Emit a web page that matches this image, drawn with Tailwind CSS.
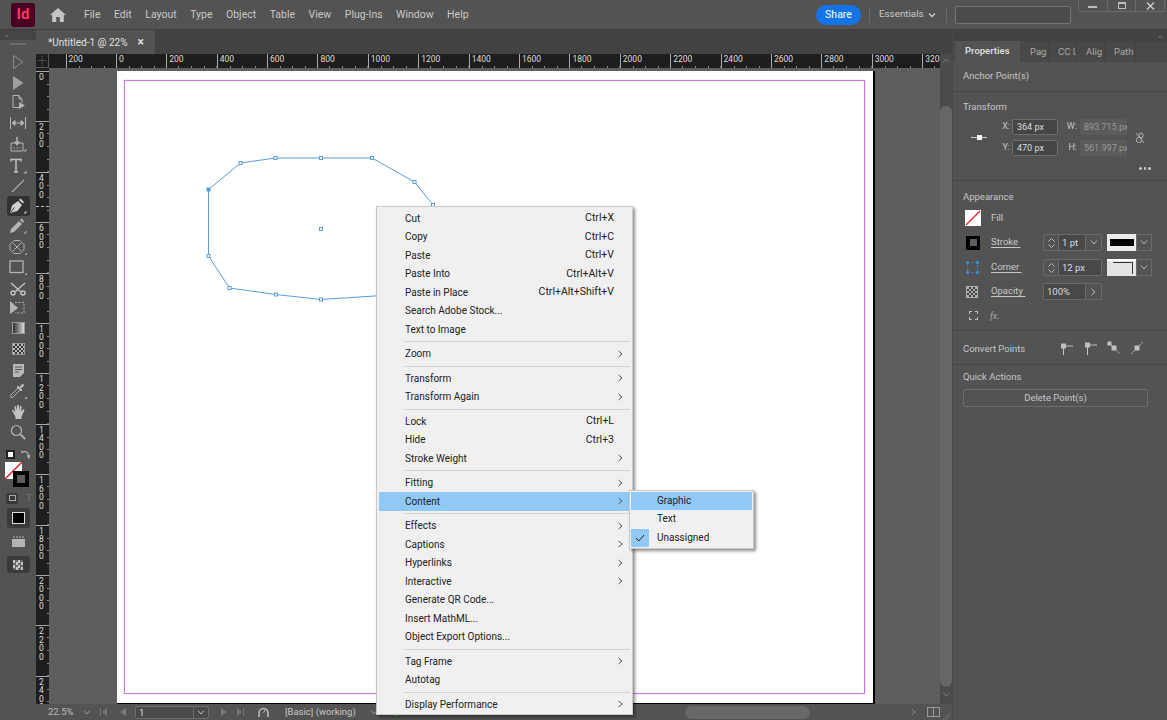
<!DOCTYPE html>
<html lang="en">
<head>
  <meta charset="UTF-8">
  <title>InDesign</title>
  <script src="https://cdn.jsdelivr.net/npm/@tailwindcss/browser@4"></script>
</head>
<body class="w-[1167px] h-[720px] overflow-hidden bg-[#535353] font-['Roboto',sans-serif] text-[10.5px] text-[#c8c8c8]">
<div class="relative flex flex-col w-[1167px] h-[720px]">

  <!-- app bar -->
  <div class="flex items-center h-[29px] shrink-0 bg-[#535353]">
    <div class="ml-[11px] w-[24px] h-[24px] rounded-[3px] bg-[#49021f] text-[#ff3366] text-[15px] font-bold flex items-center justify-center">Id</div>
    <svg class="ml-[15px] w-[16px] h-[14px]" viewBox="0 0 16 14" fill="#c4c4c4"><path d="M8 0 L0 7 L2.2 7 L2.2 14 L6.2 14 L6.2 9 L9.8 9 L9.8 14 L13.8 14 L13.8 7 L16 7Z"/></svg>
    <div class="ml-[18px] flex gap-[13.5px]">
      <span>File</span><span>Edit</span><span>Layout</span><span>Type</span><span>Object</span><span>Table</span><span>View</span><span>Plug-Ins</span><span>Window</span><span>Help</span>
    </div>
    <div class="ml-auto w-[45px] h-[20px] rounded-full bg-[#1473e6] text-white flex items-center justify-center">Share</div>
    <div class="ml-[8px] w-px h-[16px] bg-[#6a6a6a]"></div>
    <span class="ml-[9px] w-[42px] whitespace-nowrap text-[9.8px]">Essentials</span>
    <svg class="ml-[7px] w-[8px] h-[6px]" viewBox="0 0 8 6" fill="none" stroke="#c8c8c8" stroke-width="1.4"><path d="M1 1.5 L4 4.5 L7 1.5"/></svg>
    <div class="ml-[10px] w-px h-[16px] bg-[#6a6a6a]"></div>
    <div class="ml-[8px] w-[116px] h-[18px] rounded-[2px] border border-[#757575] bg-[#4b4b4b]"></div>
    <div class="ml-[7px] mr-[2px] self-start w-[87px] h-[12px] flex border border-t-0 border-[#6a6a6a] rounded-b-[2px]">
      <div class="flex-1 flex items-center justify-center border-r border-[#6a6a6a]"><div class="w-[9px] h-[2px] mt-[3px] bg-[#bbb]"></div></div>
      <div class="flex-1 flex items-center justify-center border-r border-[#6a6a6a]"><div class="w-[8px] h-[7px] border border-t-2 border-[#bbb]"></div></div>
      <div class="flex-1 flex items-center justify-center">
        <svg class="w-[9px] h-[8px]" viewBox="0 0 9 8" stroke="#ccc" stroke-width="1.4"><path d="M1 0.5 L8 7.5 M8 0.5 L1 7.5"/></svg>
      </div>
    </div>
  </div>

  <div class="flex flex-1 min-h-0 border-t border-[#3f3f3f]">

    <!-- tools -->
    <div class="w-[36px] shrink-0 flex flex-col items-center bg-[#535353]">
      <div class="w-full h-[10px] bg-[#444] flex items-center pl-[5px] text-[6px] leading-none text-[#aaa]">››</div>
      <div class="mt-[3px] mb-[7px] w-[16px] h-[2px] border-y border-[#6c6c6c]"></div>

      <div class="flex flex-col items-center w-full" id="tools">
        <div class="h-[20.4px] flex items-center"><svg class="w-[16px] h-[16px]" viewBox="0 0 16 16" fill="none" stroke="#8b8b8b"><path d="M3.5 1.5 L13 8 L3.5 14.5Z"/></svg></div>
        <div class="h-[20.4px] flex items-center"><svg class="w-[16px] h-[16px]" viewBox="0 0 16 16" fill="#a0a0a0"><path d="M3 1 L13.5 8 L3 15Z"/></svg></div>
        <div class="h-[19.4px] flex items-center"><svg class="w-[16px] h-[16px]" viewBox="0 0 16 16" fill="none" stroke="#b4b4b4"><path d="M3 1.5 H9 L12 5 V9 M3 1.5 V13.5 H9 M9 1.5 V5 H12"/><path d="M9 8 L15 11.5 L9 15Z" fill="#b4b4b4" stroke="none"/></svg></div>
        <div class="h-[21.4px] flex items-center"><svg class="w-[18px] h-[16px]" viewBox="0 0 18 16" fill="none" stroke="#b4b4b4"><path d="M1.5 2 V14 M16.5 2 V14 M3 8 H15"/><path d="M3 8 L6 5.5 V10.5Z M15 8 L12 5.5 V10.5Z" fill="#b4b4b4"/></svg></div>
        <div class="h-[21.4px] flex items-center"><svg class="w-[18px] h-[17px]" viewBox="0 0 18 17" fill="none" stroke="#b4b4b4"><path d="M2 7 V15 H14 V7 H10 M6 7 H2"/><path d="M8 1 V8 M5.5 5.5 L8 8.5 L10.5 5.5" stroke-width="1.6"/><path d="M4.5 12 H11.5" stroke-dasharray="1.5 1.5"/><path d="M15 15 H17 V13" stroke-width="1"/></svg></div>
        <div class="h-[21.4px] flex items-center"><svg class="w-[18px] h-[16px]" viewBox="0 0 18 16" fill="none" stroke="#c2c2c2" stroke-width="1.5"><path d="M2 3.5 V1.5 H12 V3.5 M7 1.5 V14 M5 14 H9"/><path d="M15 15 H17 V13" stroke-width="1"/></svg></div>
        <div class="h-[19.4px] flex items-center"><svg class="w-[16px] h-[16px]" viewBox="0 0 16 16" stroke="#a8a8a8" stroke-width="1.2"><path d="M2 14 L14 2"/></svg></div>
        <div class="h-[20.4px] w-[23px] flex items-center justify-center rounded-[3px] bg-[#323232]"><svg class="w-[18px] h-[16px]" viewBox="0 0 18 16" fill="#d0d0d0"><path d="M1 15 L3 7.5 L9 3 L13 7 L8.5 13Z"/><path d="M10 2 L11.5 0.5 L15 4 L13.8 5.5Z"/><path d="M15 15 H17 V13" fill="none" stroke="#d0d0d0"/><path d="M1.5 14.5 L5.5 9.5" stroke="#323232"/></svg></div>
        <div class="h-[20.4px] flex items-center"><svg class="w-[18px] h-[16px]" viewBox="0 0 18 16" fill="#b4b4b4"><path d="M1 15 L2 11 L10 3 L13 6 L5 14Z"/><path d="M11 2 L12.5 0.5 L15 3 L14 5Z"/><path d="M15 15 H17 V13" fill="none" stroke="#b4b4b4"/></svg></div>
        <div class="h-[20.4px] flex items-center"><svg class="w-[18px] h-[16px]" viewBox="0 0 18 16" fill="none" stroke="#b0b0b0"><path d="M5 1.5 H11 L15 5.5 V10.5 L11 14.5 H5 L1 10.5 V5.5Z M4 4 L12 12 M12 4 L4 12"/><path d="M16 15.5 H17.5 V14"/></svg></div>
        <div class="h-[20.4px] flex items-center"><svg class="w-[18px] h-[16px]" viewBox="0 0 18 16" fill="none" stroke="#b4b4b4" stroke-width="1.3"><rect x="1" y="2" width="13" height="11.5"/><path d="M16 15.5 H17.5 V14" stroke-width="1"/></svg></div>
        <div class="h-[21.4px] flex items-center"><svg class="w-[16px] h-[16px]" viewBox="0 0 16 16" fill="none" stroke="#c2c2c2" stroke-width="1.4"><path d="M1 3 L11 12 M15 3 L5 12"/><circle cx="3" cy="13" r="2"/><circle cx="13" cy="13" r="2"/></svg></div>
        <div class="h-[19.4px] flex items-center"><svg class="w-[18px] h-[16px]" viewBox="0 0 18 16" fill="none" stroke="#b4b4b4"><path d="M6 2.5 H15 V13 H6" stroke-dasharray="2 1.5"/><path d="M1 1 L9 8 L1 14Z" fill="#b4b4b4" stroke="none"/></svg></div>
        <div class="h-[20.4px] flex items-center"><div class="w-[13px] h-[12px] border border-[#999] bg-gradient-to-r from-[#333] to-[#ddd]"></div></div>
        <div class="h-[20.4px] flex items-center"><div class="w-[13px] h-[12px] border border-[#999] bg-[repeating-conic-gradient(#333_0_25%,#bbb_0_50%)] bg-[length:4px_4px]"></div></div>
        <div class="h-[22.4px] flex items-center"><svg class="w-[15px] h-[15px]" viewBox="0 0 15 15" fill="#b8b8b8"><path d="M2 1 H13 V10 L9 14 H2Z"/><path d="M4 4 H11 M4 6.5 H11 M4 9 H8" stroke="#535353"/></svg></div>
        <div class="h-[20.4px] flex items-center"><svg class="w-[18px] h-[16px]" viewBox="0 0 18 16" fill="none" stroke="#b4b4b4"><path d="M2 14.5 L1.5 12.5 L9 5 L11 7 L3.5 14.5Z"/><path d="M9 3 L13 7 L12 8 L8 4Z M11 4 L13.5 1 L15 2.5 L12 5Z" fill="#b4b4b4"/><path d="M16 15.5 H17.5 V14"/></svg></div>
        <div class="h-[20.4px] flex items-center"><svg class="w-[15px] h-[16px]" viewBox="0 0 15 16" fill="#c2c2c2"><path d="M3 10 L1 6.5 L2.3 5.8 L4 8 L3.4 2.5 L5 2.3 L5.8 6.5 L6.2 1 L8 1 L8 6.5 L9.2 2 L10.8 2.4 L10 7.5 L12.4 5 L13.6 6 L10.5 12.5 V15 H4.5 V13Z"/></svg></div>
        <div class="h-[20.4px] flex items-center"><svg class="w-[16px] h-[16px]" viewBox="0 0 16 16" fill="none" stroke="#b4b4b4" stroke-width="1.2"><circle cx="6.5" cy="6.5" r="5"/><path d="M10.5 10.5 L15 15" stroke-width="1.8"/></svg></div>
      </div>

      <!-- swap / default colours -->
      <div class="w-full flex items-center justify-between pl-[6px] pr-[6px] mt-[7px] h-[10px]">
        <div class="w-[9px] h-[9px] bg-white border-2 border-[#222]"></div>
        <svg class="w-[9px] h-[9px]" viewBox="0 0 9 9" fill="none" stroke="#b4b4b4" stroke-width="1.2"><path d="M1 3 C3 0.5 7 1 8 7 M6 5.5 L8 8 L8.8 5 M1 3 L1 0.5"/></svg>
      </div>
      <!-- fill and stroke swatches -->
      <div class="relative w-full h-[28px] mt-[3px]">
        <div class="absolute left-[5px] top-0 w-[17px] h-[17px] bg-white overflow-hidden">
          <svg class="w-full h-full" viewBox="0 0 17 17" stroke="#e01b24" stroke-width="1.4"><path d="M0 17 L17 0"/></svg>
        </div>
        <div class="absolute left-[13px] top-[9px] w-[16px] h-[16px] bg-black flex items-center justify-center"><div class="w-[8px] h-[8px] bg-[#5e5e5e]"></div></div>
      </div>
      <div class="w-full flex items-center pl-[6px] gap-[8px] h-[12px] mt-[2px]">
        <div class="w-[12px] h-[11px] rounded-[2px] bg-[#3a3a3a] flex items-center justify-center"><div class="w-[7px] h-[6px] border border-[#aaa]"></div></div>
        <span class="font-['Liberation_Serif',serif] text-[10px] leading-none text-[#777]">T</span>
      </div>
      <div class="mt-[4px] w-[23px] h-[20px] rounded-[3px] bg-[#3a3a3a] flex items-center justify-center"><div class="w-[13px] h-[12px] bg-black border border-[#ddd]"></div></div>
      <svg class="mt-[8px] w-[13px] h-[11px]" viewBox="0 0 13 11" fill="#b4b4b4"><path d="M0 3 H13 V11 H0Z"/><path d="M2 0 V2 M5 0 V2 M8 0 V2 M11 0 V2" stroke="#b4b4b4"/></svg>
      <div class="mt-[9px] w-[23px] h-[17px] rounded-[3px] bg-[#3a3a3a] flex items-center justify-center"><div class="w-[10px] h-[10px] bg-[repeating-conic-gradient(#666_0_25%,#c4c4c4_0_50%)] bg-[length:5px_5px]"></div></div>
    </div>

    <!-- document area -->
    <div class="flex flex-col flex-1 min-w-0 bg-[#424242]">
      <div class="h-[24px] shrink-0 flex">
        <div class="w-[119px] bg-[#535353] flex items-center pl-[12px] gap-[10px] text-[#e0e0e0] text-[10px]">
          <span>*Untitled-1 @ 22%</span><span class="text-[12px] font-bold leading-none">×</span>
        </div>
      </div>

      <div class="flex flex-1 min-h-0">
        <div class="flex flex-col flex-1 min-w-0">
          <!-- horizontal ruler -->
          <div class="h-[14px] shrink-0 flex bg-[#1e1e1e] overflow-hidden">
            <svg class="w-[13px] h-[14px] shrink-0 border-r border-b border-[#5a5a5a]" viewBox="0 0 13 14" stroke="#777" stroke-dasharray="1 1"><path d="M2 7 H12 M6.5 2 V13"/></svg>
            <div class="w-[16.5px] shrink-0"></div>
            <div id="hruler" class="flex"></div>
          </div>
          <div class="flex flex-1 min-h-0">
            <!-- vertical ruler -->
            <div class="relative w-[13px] shrink-0 bg-[#1e1e1e] overflow-hidden pt-[3px]">
              <div id="vruler"></div>
              <div class="absolute left-0 top-[138px] w-full border-t border-dashed border-[#bbb]"></div>
            </div>
            <!-- pasteboard -->
            <div class="flex-1 min-w-0 bg-[#5e5e5e] pl-[68px] pt-[3px] overflow-hidden">
              <div class="relative w-[756px] h-[632px] bg-white pl-[7px] pt-[9px] shadow-[1px_1px_0_1px_#000]">
                <div class="w-[741px] h-[614px] border border-[#c977e4] shadow-[0_0_1px_#d596ea]"></div>
                <svg class="absolute left-0 top-0 w-[756px] h-[632px]" viewBox="117 71 756 632" fill="none" stroke="#5b9bd9">
                  <path d="M208.5 189.5 L240.5 163 L275.5 158 L321 158 L372 158 L414.5 182 L433 205 L440 214 M208.5 189.5 L208.5 256 L229.5 288 L276 294.5 L321 299.5 L390 295"/>
                  <g fill="#fff">
                    <rect x="239" y="161.5" width="3" height="3"/><rect x="274" y="156.5" width="3" height="3"/><rect x="319.5" y="156.5" width="3" height="3"/><rect x="370.5" y="156.5" width="3" height="3"/><rect x="413" y="180.5" width="3" height="3"/><rect x="431.5" y="203.5" width="3" height="3"/><rect x="207" y="254.5" width="3" height="3"/><rect x="228" y="286.5" width="3" height="3"/><rect x="274.5" y="293" width="3" height="3"/><rect x="319.5" y="298" width="3" height="3"/><rect x="319.5" y="227.5" width="3" height="3"/>
                  </g>
                  <rect x="207" y="188" width="3" height="3" fill="#5b9bd9"/>
                </svg>
              </div>
            </div>
          </div>
        </div>
        <!-- vertical scrollbar -->
        <div class="w-[12px] shrink-0 bg-[#4a4a4a] flex flex-col items-center pt-[3px]">
          <svg class="mt-[1px] w-[8px] h-[5px]" viewBox="0 0 8 5" fill="none" stroke="#7a7a7a"><path d="M1 4.5 L4 1 L7 4.5"/></svg>
          <div class="mt-[43px] w-[12px] h-[581px] rounded-full bg-[#666]"></div>
          <svg class="mt-[5px] w-[8px] h-[5px]" viewBox="0 0 8 5" fill="none" stroke="#7a7a7a"><path d="M1 0.5 L4 4 L7 0.5"/></svg>
        </div>
      </div>

      <!-- status bar -->
      <div class="h-[16px] shrink-0 flex items-center bg-[#535353] text-[9.5px] text-[#bbb]">
        <div class="w-[649px] shrink-0 flex items-center">
          <span class="ml-[12px] w-[24px]">22.5%</span>
          <svg class="ml-[11px] w-[8px] h-[5px]" viewBox="0 0 8 5" fill="none" stroke="#999"><path d="M1 0.5 L4 4 L7 0.5"/></svg>
          <svg class="ml-[9px] w-[7px] h-[8px]" viewBox="0 0 7 8" fill="#777"><path d="M0 0 H1 V8 H0Z M7 0 V8 L2 4Z"/></svg>
          <svg class="ml-[13px] w-[6px] h-[8px]" viewBox="0 0 6 8" fill="#777"><path d="M6 0 V8 L0 4Z"/></svg>
          <div class="ml-[9px] w-[74px] h-[13px] flex border border-[#6e6e6e] rounded-[2px] bg-[#4a4a4a]">
            <span class="flex-1 pl-[3px] leading-[11px] text-[#ddd]">1</span>
            <div class="w-[15px] border-l border-[#6e6e6e] flex items-center justify-center"><svg class="w-[8px] h-[5px]" viewBox="0 0 8 5" fill="none" stroke="#bbb"><path d="M1 0.5 L4 4 L7 0.5"/></svg></div>
          </div>
          <svg class="ml-[12px] w-[6px] h-[8px]" viewBox="0 0 6 8" fill="#777"><path d="M0 0 V8 L6 4Z"/></svg>
          <svg class="ml-[10px] w-[7px] h-[8px]" viewBox="0 0 7 8" fill="#777"><path d="M0 0 V8 L5 4Z M6 0 H7 V8 H6Z"/></svg>
          <svg class="ml-[14px] w-[14px] h-[11px]" viewBox="0 0 14 11" fill="none" stroke="#bbb" stroke-width="1.6"><path d="M1 10 V6 A4.5 4.5 0 0 1 10 6 V10"/><path d="M7 3 L5.5 6" stroke-width="1"/></svg>
          <span class="ml-[13px] w-[66px] text-[#c8c8c8] whitespace-nowrap">[Basic] (working)</span>
          <svg class="ml-[19px] w-[8px] h-[5px]" viewBox="0 0 8 5" fill="none" stroke="#999"><path d="M1 0.5 L4 4 L7 0.5"/></svg>
          <div class="ml-[14px] w-[7px] h-[7px] rounded-full bg-[#3fae49]"></div>
          <span class="ml-[4px] text-[#999] whitespace-nowrap">No errors</span>
        </div>
        <div class="w-[125px] h-[13px] rounded-full bg-[#686868]"></div>
        <svg class="ml-auto w-[5px] h-[8px]" viewBox="0 0 5 8" fill="none" stroke="#888"><path d="M0.5 1 L4 4 L0.5 7"/></svg>
        <div class="ml-[11px] w-[13px] h-[10px] border border-[#999] flex justify-center"><div class="w-px h-full bg-[#999]"></div></div>
        <svg class="ml-[3px] mr-[2px] w-[7px] h-[7px] self-end" viewBox="0 0 7 7" stroke="#777"><path d="M0 7 L7 0 M3 7 L7 3"/></svg>
      </div>
    </div>

    <!-- properties panel -->
    <div class="w-[215px] shrink-0 bg-[#535353] border-l border-[#484848] flex flex-col text-[9.5px] text-[#c6c6c6]">
      <div class="h-[11px] bg-[#424242] flex items-center justify-end pr-[5px] text-[6px] leading-none text-[#aaa]">››</div>
      <div class="h-[21px] flex bg-[#484848]">
        <div class="ml-[2px] w-[65px] bg-[#535353] flex items-center pl-[10px] font-semibold text-[#dcdcdc]">Properties</div>
        <div class="w-[29px] pl-[10px] border-r border-[#424242] leading-[21px] text-[#a8a8a8] overflow-hidden">Pag</div>
        <div class="w-[28px] pl-[9px] border-r border-[#424242] leading-[21px] text-[#a8a8a8] overflow-hidden whitespace-nowrap">CC L</div>
        <div class="w-[28px] pl-[9px] border-r border-[#424242] leading-[21px] text-[#a8a8a8] overflow-hidden">Alig</div>
        <div class="w-[31px] pl-[9px] border-r border-[#424242] leading-[21px] text-[#a8a8a8] overflow-hidden">Path</div>
      </div>
      <div class="h-[30px] pl-[10px] flex items-center border-b border-[#484848]">Anchor Point(s)</div>

      <!-- transform -->
      <div class="h-[89px] pl-[10px] pt-[8px] border-b border-[#484848] flex flex-col">
        <span class="leading-[14px]">Transform</span>
        <div class="mt-[5px] flex items-center">
          <div class="relative w-[16px] h-[16px] ml-[8px] flex items-center justify-center">
            <div class="absolute w-[16px] h-px bg-[#ccc]"></div><div class="absolute w-[5px] h-[5px] bg-white"></div>
          </div>
          <div class="ml-[11px] grid grid-cols-[14px_46px_22px_47px] grid-rows-[16px_16px] gap-y-[5px] items-center text-[9px] whitespace-nowrap">
            <span class="text-right pr-[2px]">X:</span>
            <div class="h-[16px] border border-[#6e6e6e] rounded-[2px] bg-[#454545] pl-[4px] leading-[14px] text-[#ddd]">364 px</div>
            <span class="text-right pr-[3px]">W:</span>
            <div class="h-[16px] rounded-[2px] bg-[#5b5b5b] pl-[4px] leading-[16px] text-[#999] overflow-hidden">893.715 px</div>
            <span class="text-right pr-[2px]">Y:</span>
            <div class="h-[16px] border border-[#6e6e6e] rounded-[2px] bg-[#454545] pl-[4px] leading-[14px] text-[#ddd]">470 px</div>
            <span class="text-right pr-[3px]">H:</span>
            <div class="h-[16px] rounded-[2px] bg-[#5b5b5b] pl-[4px] leading-[16px] text-[#999] overflow-hidden">561.997 px</div>
          </div>
          <svg class="ml-[8px] w-[10px] h-[12px]" viewBox="0 0 10 12" fill="none" stroke="#b0b0b0"><rect x="1.5" y="5.5" width="5" height="5" rx="2"/><rect x="4" y="1" width="4" height="5" rx="2"/><path d="M1 1 L9 11"/></svg>
        </div>
        <div class="mt-[11px] ml-[176px] flex gap-[2px]"><i class="w-[2.5px] h-[2.5px] rounded-full bg-[#ccc]"></i><i class="w-[2.5px] h-[2.5px] rounded-full bg-[#ccc]"></i><i class="w-[2.5px] h-[2.5px] rounded-full bg-[#ccc]"></i></div>
      </div>

      <!-- appearance -->
      <div class="h-[150px] pl-[10px] pt-[9px] border-b border-[#484848] flex flex-col">
        <span class="leading-[14px]">Appearance</span>
        <div class="mt-[6px] h-[16px] flex items-center">
          <div class="ml-[2px] w-[16px] h-[16px] bg-white"><svg class="w-full h-full" viewBox="0 0 16 16" stroke="#e01b24" stroke-width="1.3"><path d="M1 15 L15 1"/></svg></div>
          <span class="ml-[10px]">Fill</span>
        </div>
        <div class="mt-[8px] h-[17px] flex items-center">
          <div class="ml-[3px] w-[14px] h-[14px] bg-black flex items-center justify-center"><div class="w-[7px] h-[7px] bg-[#5e5e5e]"></div></div>
          <span class="ml-[11px] w-[52px] underline underline-offset-2">Stroke&nbsp;</span>
          <div class="w-[59px] h-[17px] flex border border-[#6a6a6a] rounded-[2px]">
            <div class="w-[15px] border-r border-[#6a6a6a] flex flex-col items-center justify-center gap-[2px]"><svg class="w-[7px] h-[4px]" viewBox="0 0 7 4" fill="none" stroke="#bbb"><path d="M0.5 3.5 L3.5 0.5 L6.5 3.5"/></svg><svg class="w-[7px] h-[4px]" viewBox="0 0 7 4" fill="none" stroke="#bbb"><path d="M0.5 0.5 L3.5 3.5 L6.5 0.5"/></svg></div>
            <span class="flex-1 pl-[3px] leading-[15px] text-[#ddd] bg-[#484848]">1 pt</span>
            <div class="w-[16px] border-l border-[#6a6a6a] flex items-center justify-center"><svg class="w-[8px] h-[5px]" viewBox="0 0 8 5" fill="none" stroke="#bbb"><path d="M1 0.5 L4 4 L7 0.5"/></svg></div>
          </div>
          <div class="ml-[5px] w-[29px] h-[17px] bg-[#ececec] flex items-center justify-center"><div class="w-[24px] h-[7px] bg-black"></div></div>
          <div class="w-[16px] h-[17px] border border-[#6a6a6a] flex items-center justify-center"><svg class="w-[8px] h-[5px]" viewBox="0 0 8 5" fill="none" stroke="#bbb"><path d="M1 0.5 L4 4 L7 0.5"/></svg></div>
        </div>
        <div class="mt-[8px] h-[17px] flex items-center">
          <svg class="ml-[3px] w-[13px] h-[13px]" viewBox="0 0 13 13" fill="none"><rect x="1.5" y="1.5" width="10" height="10" stroke="#3f86cc" stroke-dasharray="2 2"/><path d="M0 0 H3 V3 H0Z M10 0 H13 V3 H10Z M0 10 H3 V13 H0Z M10 10 H13 V13 H10Z" fill="#3f86cc"/></svg>
          <span class="ml-[12px] w-[52px] underline underline-offset-2">Corner&nbsp;</span>
          <div class="w-[59px] h-[17px] flex border border-[#6a6a6a] rounded-[2px]">
            <div class="w-[15px] border-r border-[#6a6a6a] flex flex-col items-center justify-center gap-[2px]"><svg class="w-[7px] h-[4px]" viewBox="0 0 7 4" fill="none" stroke="#bbb"><path d="M0.5 3.5 L3.5 0.5 L6.5 3.5"/></svg><svg class="w-[7px] h-[4px]" viewBox="0 0 7 4" fill="none" stroke="#bbb"><path d="M0.5 0.5 L3.5 3.5 L6.5 0.5"/></svg></div>
            <span class="flex-1 pl-[3px] leading-[15px] text-[#ddd] bg-[#484848]">12 px</span>
          </div>
          <div class="ml-[5px] w-[29px] h-[17px] bg-[#e4e4e4] border-t-2 border-white pr-[3px] flex justify-end"><div class="w-[20px] h-[12px] mt-[1px] border-t border-r border-[#333]"></div></div>
          <div class="w-[16px] h-[17px] border border-[#6a6a6a] flex items-center justify-center"><svg class="w-[8px] h-[5px]" viewBox="0 0 8 5" fill="none" stroke="#bbb"><path d="M1 0.5 L4 4 L7 0.5"/></svg></div>
        </div>
        <div class="mt-[7px] h-[17px] flex items-center">
          <div class="ml-[3px] w-[12px] h-[12px] border border-[#aaa] bg-[repeating-conic-gradient(#444_0_25%,#aaa_0_50%)] bg-[length:4px_4px]"></div>
          <span class="ml-[13px] w-[52px] underline underline-offset-2">Opacity&nbsp;</span>
          <div class="w-[59px] h-[17px] flex border border-[#6a6a6a] rounded-[2px]">
            <span class="flex-1 pl-[3px] leading-[15px] text-[#ddd] bg-[#484848]">100%</span>
            <div class="w-[16px] border-l border-[#6a6a6a] flex items-center justify-center"><svg class="w-[5px] h-[8px]" viewBox="0 0 5 8" fill="none" stroke="#bbb"><path d="M0.5 1 L4 4 L0.5 7"/></svg></div>
          </div>
        </div>
        <div class="mt-[8px] h-[14px] flex items-center">
          <div class="ml-[6px] w-[9px] h-[9px] border border-dashed border-[#bbb]"></div>
          <span class="ml-[12px] font-['Liberation_Serif',serif] italic text-[10px] text-[#aaa]">fx.</span>
        </div>
      </div>

      <div class="h-[34px] pl-[10px] pt-[3px] flex items-center border-b border-[#484848]">
        <span class="w-[98px]">Convert Points</span>
        <svg class="w-[13px] h-[13px] -mt-[2px]" viewBox="0 0 13 13" fill="none" stroke="#c0c0c0"><rect x="0.5" y="2" width="4" height="4" fill="#c0c0c0"/><path d="M5 4 H12 M2.5 6 V13"/></svg>
        <svg class="ml-[10px] w-[14px] h-[13px] -mt-[2px]" viewBox="0 0 14 13" fill="none" stroke="#c0c0c0"><rect x="1.5" y="1" width="4" height="4" fill="#c0c0c0"/><path d="M6 3 H13 M3.5 5 V13"/></svg>
        <svg class="ml-[9px] w-[14px] h-[14px] -mt-[2px]" viewBox="0 0 14 14" fill="none" stroke="#c0c0c0"><rect x="1" y="1" width="3" height="3" fill="#c0c0c0"/><rect x="5" y="5" width="4" height="4" fill="#c0c0c0"/><path d="M4 4 L13 13" stroke-dasharray="2 1"/></svg>
        <svg class="ml-[9px] w-[14px] h-[14px] -mt-[2px]" viewBox="0 0 14 14" fill="none" stroke="#c0c0c0"><rect x="5" y="5" width="4" height="4" fill="#c0c0c0"/><path d="M1 13 L13 1" stroke-dasharray="2 1"/></svg>
      </div>

      <div class="pl-[10px] pt-[5px]">
        <span class="block leading-[14px]">Quick Actions</span>
        <div class="mt-[5px] w-[185px] h-[18px] border border-[#6e6e6e] rounded-[2px] flex items-center justify-center">Delete Point(s)</div>
      </div>
    </div>
  </div>

  <!-- context menu -->
  <div id="menu" class="absolute left-[376px] top-[206px] w-[257px] h-[509px] pt-[2px] px-[2px] bg-[#f0f0f0] border border-[#c9c9c9] shadow-[2px_2px_3px_rgba(0,0,0,0.45)] text-[10.5px] text-[#222]"></div>

  <!-- content submenu -->
  <div class="absolute left-[629px] top-[490px] w-[125px] h-[59px] pt-[0.5px] px-[1px] bg-[#f0f0f0] border border-[#c9c9c9] shadow-[2px_2px_3px_rgba(0,0,0,0.45)] text-[10px] text-[#222]">
    <div class="h-[18.5px] leading-[18.5px] pl-[26px] bg-[#90c8f6]">Graphic</div>
    <div class="h-[18.5px] leading-[18.5px] pl-[26px]">Text</div>
    <div class="h-[18.5px] flex items-center">
      <div class="w-[18px] h-[18.5px] bg-[#90c8f6] flex items-center justify-center"><svg class="w-[10px] h-[8px]" viewBox="0 0 10 8" fill="none" stroke="#222"><path d="M1 4 L3.8 7 L9 1"/></svg></div>
      <span class="ml-[8px]">Unassigned</span>
    </div>
  </div>
</div>

<script>
  const hruler = document.getElementById('hruler');
  ['200', 0, 200, 400, 600, 800, 1000, 1200, 1400, 1600, 1800, 2000, 2200, 2400, 2600, 2800, 3000, 3200].forEach(n => {
    const cell = document.createElement('div');
    cell.className = 'w-[50.4px] h-[14px] shrink-0 border-l border-[#aaa] pl-[2px] text-[8.5px] leading-[11px] text-[#ddd] bg-[repeating-linear-gradient(90deg,transparent_0,transparent_11.6px,#888_11.6px,#888_12.6px)] bg-[length:100%_2px] bg-bottom bg-no-repeat';
    cell.textContent = n;
    hruler.appendChild(cell);
  });

  const vruler = document.getElementById('vruler');
  [0, 200, 400, 600, 800, 1000, 1200, 1400, 1600, 1800, 2000, 2200, 2400].forEach(n => {
    const cell = document.createElement('div');
    cell.className = 'relative h-[50.4px] border-t border-[#aaa] pl-[3px] pt-px text-[8.5px] leading-[8.5px] text-[#ddd] bg-[repeating-linear-gradient(180deg,transparent_0,transparent_11.6px,#888_11.6px,#888_12.6px)] bg-[length:2px_100%] bg-right bg-no-repeat';
    cell.innerHTML = String(n).split('').map(d => '<div>' + d + '</div>').join('');
    vruler.appendChild(cell);
  });

  const menu = document.getElementById('menu');
  const items = [
    ['Cut', 'Ctrl+X'], ['Copy', 'Ctrl+C'], ['Paste', 'Ctrl+V'], ['Paste Into', 'Ctrl+Alt+V'],
    ['Paste in Place', 'Ctrl+Alt+Shift+V'], ['Search Adobe Stock...'], ['Text to Image'], null,
    ['Zoom', '>'], null,
    ['Transform', '>'], ['Transform Again', '>'], null,
    ['Lock', 'Ctrl+L'], ['Hide', 'Ctrl+3'], ['Stroke Weight', '>'], null,
    ['Fitting', '>'], ['Content', '>', true], null,
    ['Effects', '>'], ['Captions', '>'], ['Hyperlinks', '>'], ['Interactive', '>'],
    ['Generate QR Code...'], ['Insert MathML...'], ['Object Export Options...'], null,
    ['Tag Frame', '>'], ['Autotag'], null,
    ['Display Performance', '>']
  ];
  const arrow = '<svg class="w-[5px] h-[8px]" viewBox="0 0 5 8" fill="none" stroke="#555"><path d="M0.5 1 L4 4 L0.5 7"/></svg>';
  items.forEach(item => {
    const row = document.createElement('div');
    if (!item) {
      row.className = 'h-[6px] ml-[25px] flex items-center';
      row.innerHTML = '<div class="w-full h-px bg-[#d4d4d4]"></div>';
    } else {
      row.className = 'h-[18.5px] flex items-center justify-between pl-[26px] pr-[7px]' + (item[2] ? ' bg-[#90c8f6]' : '');
      const right = item[1] === '>' ? arrow : item[1] ? '<span class="mr-[9px]">' + item[1] + '</span>' : '';
      row.innerHTML = '<span class="text-[10px]">' + item[0] + '</span>' + right;
    }
    menu.appendChild(row);
  });
</script>
</body>
</html>
